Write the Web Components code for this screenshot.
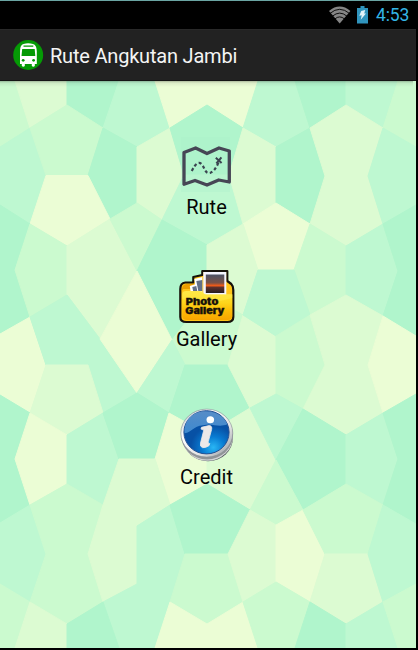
<!DOCTYPE html>
<html lang="id"><head><meta charset="utf-8"><title>Rute Angkutan Jambi</title>
<style>html,body{margin:0;height:100%;background:#000;overflow:hidden}</style></head>
<body><jambi-app></jambi-app>
<script>
const define = (name, html) => customElements.define(name, class extends HTMLElement {
  constructor() {
    super();
    this.attachShadow({mode:'open'}).innerHTML = html;
  }
});

define('status-bar', `<style>
:host{display:flex;box-sizing:border-box;height:29px;background:#000;border-top:1px solid #6aa5a3;align-items:center;justify-content:flex-end;padding-right:9px;font:17.5px/28px Roboto,sans-serif;color:#33b5e5}
svg{display:block}.wifi{margin-right:6px}.bat{margin-right:8px}span{display:block;width:33px;height:28px;white-space:nowrap;letter-spacing:-.1px}
</style>
<svg class="wifi" width="22" height="18" viewBox="0 0 22 18"><path d="M0 5Q10.700-3.800 21.400 5L10.700 17.500Z" fill="#858585"/><path d="M1 7.400Q10.700-.8 20.400 7.400M3.400 10.200Q10.700 4 18 10.200M5.800 13Q10.700 8.800 15.600 13" fill="none" stroke="#000" stroke-width=".9"/></svg>
<svg class="bat" width="11" height="18" viewBox="0 0 11 18"><path d="M3.500 0h4v2H11v15.500H0V2h3.500z" fill="#3094bd"/><path d="M4.200 5l4-1-1 3.600 1.800-.2-5.300 6.300 1-4.400-2.400.4z" fill="#e2f4fa"/></svg>
<span>4:53</span>`);

define('action-bar', `<style>
:host{display:flex;box-sizing:border-box;height:52px;align-items:center;padding-left:13px;gap:6px;background:#222;border-top:1px solid #292929;border-bottom:1px solid #151515;color:#f4f4f4;font:20px/50px Roboto,sans-serif;letter-spacing:-.2px}
svg{display:block}span{padding-top:1px;white-space:nowrap}
</style>
<svg width="31" height="31" viewBox="0 0 31 31"><circle cx="15.200" cy="15" r="15" fill="#059a05"/><path d="M7 24V11Q7 5 10.500 4 15 2.500 20 4 23.600 5 23.800 11v13h-2v2q-1.500 1.300-3 0v-2h-7v2q-1.500 1.300-3 0v-2z" fill="#fff"/><path d="M10.500 5.500h9.800v1.200h-9.800zM9.200 9h12.500l.6 7H8.500z" fill="#059a05"/><circle cx="10.200" cy="20.300" r="1.400" fill="#059a05"/><circle cx="20.600" cy="20.300" r="1.400" fill="#059a05"/></svg>
<span><slot></slot></span>`);

define('menu-item', `<style>
:host{display:grid;justify-items:center;grid-template-rows:55px 31px;color:#050505;font:20px/30px Roboto,sans-serif}
div{line-height:0}span{white-space:nowrap}
</style><div><slot name="icon"></slot></div><span><slot></slot></span>`);

define('map-icon', `<style>:host{display:block}svg{display:block}</style>
<svg width="56" height="56" viewBox="0 0 56 56"><rect x="2" width="49" height="55" fill="#a8edca" opacity=".28"/><path d="M5 15.500L16.600 11 28 16.500 40 11 50.300 14v31L39.700 43 28 48 16 43.500 5 47.300z" fill="none" stroke="#464655" stroke-width="3.300" stroke-linejoin="round"/><path d="M12.800 34Q18 23 22.500 27C26 31 26 37 31 36Q36 34 39.500 25.500" fill="none" stroke="#3b4450" stroke-width="2.200" stroke-dasharray="3 2.400"/><path d="M36.800 20.800l5.800 5.200M42.400 20.300l-5 6.200" stroke="#3b4450" stroke-width="2"/></svg>`);

define('gallery-icon', `<style>:host{display:block}svg{display:block}text{font:900 9.200px Inter,"Open Sans",sans-serif;stroke:#17120a;stroke-width:.3px}</style>
<svg width="56" height="56" viewBox="0 0 56 56"><defs><linearGradient id="g" x2="0" y2="1"><stop stop-color="#ffe23b"/><stop offset=".4" stop-color="#fdd61c"/><stop offset=".65" stop-color="#fdbe07"/><stop offset="1" stop-color="#f8a500"/></linearGradient><linearGradient id="s" x2="0" y2="1"><stop stop-color="#4c5266"/><stop offset=".45" stop-color="#795147"/><stop offset=".6" stop-color="#f05b19"/><stop offset=".7" stop-color="#5d302c"/><stop offset="1" stop-color="#241d22"/></linearGradient></defs>
<g transform="translate(-.7 0)"><path d="M2 48V20Q2 14 7 13.500h8V8l9-2V2h25v10l4 3q2 2 2 6v27q0 5-6 5H8q-6 0-6-5z" fill="#ffc519" stroke="#16120b" stroke-width="2.200" stroke-linejoin="round"/>
<path d="M3.500 22Q3 16 8 15h8l3 5H5z" fill="#eb9d00"/>
<path d="M11.500 17l6-2 2 9h-7zM16 10l8-2v16h-6z" fill="#fff"/><path d="M14 18l4-1 1 5-4 1zM18 12l6-1v11h-4z" fill="#626f87"/>
<path d="M25 3h23v23H25z" fill="#f5f5ff"/><path d="M27.500 5.500h18.500v18.500H27.500z" fill="url(#s)"/>
<path d="M4 25q0-3 4-3h13q3 0 4 2 1 1.500 5 1.500h24V47q0 4-5 4H9q-5 0-5-4z" fill="url(#g)"/><path d="M4 30Q28 37 54 29v-4H30q-4 0-5-2l-3-1H8q-4 0-4 3z" fill="#fff45e" opacity=".35"/>
<text x="7.500" y="35.500" textLength="32.500" lengthAdjust="spacingAndGlyphs" fill="#17120a">Photo</text><text x="7" y="45" textLength="39" lengthAdjust="spacingAndGlyphs" fill="#17120a">Gallery</text></g></svg>`);

define('info-icon', `<style>:host{display:block}svg{display:block}</style>
<svg width="56" height="56" viewBox="0 0 56 56"><defs><linearGradient id="r" x2="1" y2="1"><stop stop-color="#aab5bd"/><stop offset=".3" stop-color="#fff"/><stop offset=".65" stop-color="#e5e5e5"/><stop offset="1" stop-color="#8c9298"/></linearGradient><radialGradient id="b" cy=".85" cx=".65"><stop stop-color="#29b6f4"/><stop offset=".5" stop-color="#087bd2"/><stop offset="1" stop-color="#0751a5"/></radialGradient><linearGradient id="h" x2="0" y2="1"><stop stop-color="#6a9bd0"/><stop offset="1" stop-color="#4c98da"/></linearGradient></defs>
<g transform="translate(0 1.300)"><ellipse cx="29" cy="29.500" rx="25" ry="23.500" fill="#555b60"/><ellipse cx="28.400" cy="28" rx="25.600" ry="24.500" fill="#d3d5d7"/><ellipse cx="28" cy="26.600" rx="26" ry="24.500" fill="#909497"/><ellipse cx="27.800" cy="24.800" rx="26" ry="24" fill="url(#r)" stroke="#858d94" stroke-width=".6"/><ellipse cx="27.500" cy="24" rx="22.600" ry="21.600" fill="url(#b)" stroke="#234f91"/><path d="M5.500 25C5 10 15 3 27 3c10 0 18 5 21.500 13C38 20 34 14 24 17 14 18 13 24 5.500 25z" fill="url(#h)" opacity=".8"/>
<ellipse cx="31.300" cy="11.500" rx="3.800" ry="3.500" fill="#fff"/><path d="M22.500 19l7.500-1.700q3.500.2 2.600 4l-3.300 12q-.6 2.700 1.600 2l-1 2.200q-4 2.500-6.500 1.800-2.800-1-1.900-4.500l3-12q.4-2-2.500-2z" fill="#ece9e8" stroke="#ece9e8" stroke-width=".8"/></g></svg>`);

const D='#b0f5cc',M='#bef8d1',L='#cbfacf',P='#dcfbd2',Y='#ebfdd5';
const cells = [
[L,'0,81 15,81 30,128 0,147'],[P,'15,81 67,81 67,105 30,128'],[D,'67,81 119,81 103,128 67,105'],
[M,'119,81 155,81 170,128 137,147 103,128'],[Y,'155,81 258,81 243,128 207,105 170,128'],
[M,'0,147 30,128 46,175.500 30,224 0,205'],[L,'30,128 67,105 103,128 88,175.500 46,175.500'],
[D,'103,128 137,147 137,203 110,219 88,175.500'],[P,'137,147 170,128 184,175 162,220 137,203'],
[Y,'46,175.500 88,175.500 110,219 67,246 30,224'],[D,'170,128 207,105 243,128 229,175 184,175'],
[M,'184,175 229,175 243,224 207,245 162,220'],[M,'258,81 295,81 310,128 276,147 243,128'],
[D,'295,81 346,81 346,105 310,128'],[M,'346,81 398,81 383,128 346,105'],[L,'398,81 416,81 416,147 383,128'],
[P,'243,128 276,147 276,203 243,224 229,175'],[D,'276,147 310,128 325,176 310,224 276,203'],
[P,'310,128 346,105 383,128 368,176 383,224 346,246 310,224 325,176'],[M,'383,128 416,147 416,205 383,224 368,176'],
[Y,'243,224 276,203 310,224 294,270 258,270'],[L,'310,224 346,246 346,295 310,315 294,270'],
[M,'346,246 383,224 398,271 383,316 346,295'],[D,'383,224 416,205 416,336 383,316 398,271'],
[D,'0,205 30,224 15,270 30,317 0,334'],[L,'30,224 67,246 67,295 30,317 15,270'],
[P,'67,246 110,219 137,271 100,339 67,295'],[L,'110,219 137,203 162,220 137,271'],
[D,'162,220 207,245 207,295 172,340 137,271'],[P,'207,245 243,224 258,270 243,315 207,295'],
[L,'172,340 207,295 243,315 228,365 185,365'],[Y,'0,334 30,317 46,365 30,413 0,395'],
[M,'30,317 67,295 100,339 137,393 103,413 88,365 46,365'],[Y,'137,271 172,340 137,393 100,339'],
[M,'172,340 185,365 169,413 137,393'],[P,'46,365 88,365 103,413 67,435 30,413'],
[D,'185,365 228,365 250,408 207,434 169,413'],[P,'243,315 276,336 276,394 250,408 228,365'],
[M,'258,270 294,270 310,315 276,336 243,315'],[L,'276,336 310,315 325,365 303,409 276,394'],
[P,'310,315 346,295 383,316 368,365 383,413 346,435 303,409 325,365'],[Y,'383,316 416,336 416,394 383,413 368,365'],
[D,'0,395 30,413 15,459 30,505 0,523'],[Y,'30,413 67,435 67,484 30,505 15,459'],
[M,'67,435 103,413 119,459 103,505 67,484'],[D,'103,413 137,393 169,413 155,459 119,459'],
[Y,'169,413 207,434 207,484 170,505 155,459'],[P,'207,434 250,408 276,460 250,510 207,484'],
[M,'250,408 276,394 303,409 276,460'],[D,'303,409 346,435 346,484 303,510 276,460'],
[M,'346,435 383,413 398,459 383,505 346,484'],[D,'383,413 416,394 416,524 383,505 398,459'],
[L,'276,460 303,510 276,525 250,510'],[M,'0,523 30,505 46,554 30,602 0,584'],
[L,'30,505 67,484 103,505 88,554 103,602 67,624 30,602 46,554'],
[P,'119,459 155,459 170,505 137,526 137,584 103,602 88,554 103,505'],
[M,'137,526 170,505 185,554 170,602 155,648 119,648 103,602 137,584'],
[D,'170,505 207,484 250,510 228,554 185,554'],[L,'185,554 228,554 243,602 207,624 170,602'],
[Y,'170,602 207,624 243,602 258,648 155,648'],[P,'250,510 276,525 276,582 243,602 228,554'],
[Y,'276,525 303,510 325,554 310,602 276,582'],[L,'303,510 346,484 383,505 368,554 325,554'],
[P,'325,554 368,554 383,602 346,624 310,602'],[M,'383,505 416,524 416,584 383,602 368,554'],
[L,'243,602 276,582 310,602 295,648 258,648'],[D,'310,602 346,624 346,648 295,648'],
[M,'346,624 383,602 398,648 346,648'],[L,'383,602 416,584 416,648 398,648'],
[L,'0,584 30,602 15,648 0,648'],[P,'30,602 67,624 67,648 15,648'],[D,'67,624 103,602 119,648 67,648']];

define('mosaic-panel', `<style>
:host{display:grid;height:567px;width:416px;overflow:hidden;background:#c8f9d0}
svg,main{grid-area:1/1}svg{display:block}
main{z-index:1;display:flex;flex-direction:column;align-items:center;padding-top:56px;box-sizing:border-box;width:413px;background:linear-gradient(#0004,#0001 2px,#0000 6px) no-repeat 0 0/416px 6px}
</style><svg width="416" height="567" viewBox="0 81 416 567">${cells.map(([c,p])=>`<polygon points="${p}" fill="${c}" stroke="${c}" stroke-width="1" stroke-linejoin="round"/>`).join('')}</svg><main><slot></slot></main>`);

define('jambi-app', `<style>
:host{display:flex;flex-direction:column;width:418px;height:650px;background:#000}
status-bar{width:418px}action-bar{width:416px}
.gallery{margin-top:46px}.credit{margin-top:52px}
</style><status-bar></status-bar><action-bar>Rute Angkutan Jambi</action-bar>
<mosaic-panel><menu-item><map-icon slot="icon"></map-icon>Rute</menu-item>
<menu-item class="gallery"><gallery-icon slot="icon"></gallery-icon>Gallery</menu-item>
<menu-item class="credit"><info-icon slot="icon"></info-icon>Credit</menu-item></mosaic-panel>`);
</script></body></html>
